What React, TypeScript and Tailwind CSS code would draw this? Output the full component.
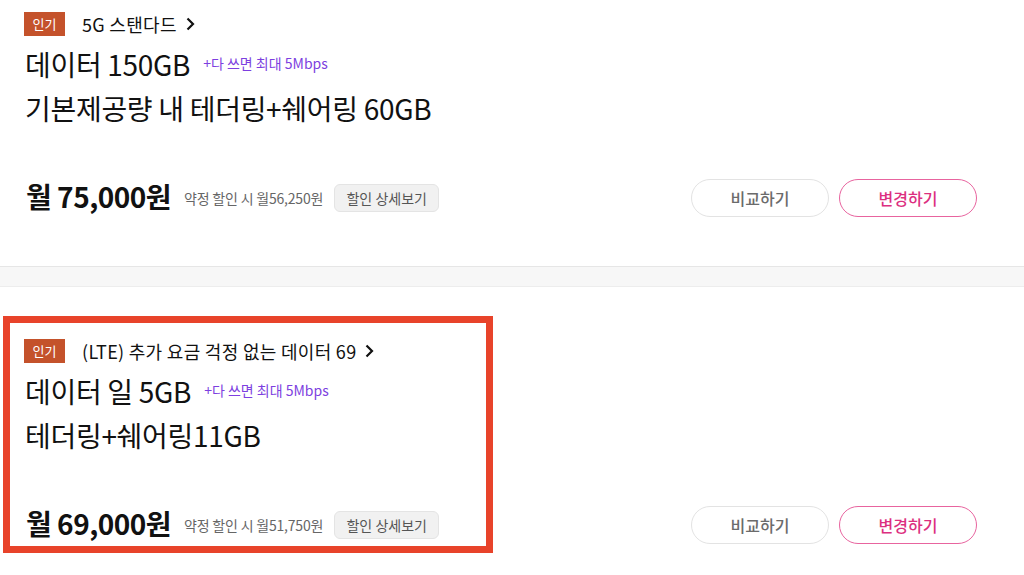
import React from 'react';

type Plan = {
  name: string;
  data: string;
  extra: string;
  price: string;
  discount: string;
};

const plans: Plan[] = [
  {
    name: '5G 스탠다드',
    data: '데이터 150GB',
    extra: '기본제공량 내 테더링+쉐어링 60GB',
    price: '월 75,000원',
    discount: '약정 할인 시 월56,250원',
  },
  {
    name: '(LTE) 추가 요금 걱정 없는 데이터 69',
    data: '데이터 일 5GB',
    extra: '테더링+쉐어링11GB',
    price: '월 69,000원',
    discount: '약정 할인 시 월51,750원',
  },
];

const PlanCard: React.FC<{ plan: Plan; first?: boolean; highlight?: boolean }> = ({ plan, first, highlight }) => (
  <section className={`relative bg-white pl-6 pr-[47px] ${first ? 'pt-3 pb-[49px]' : 'pt-[52px] pb-10'}`}>
    {highlight && (
      <div className="absolute left-[3px] top-[29px] w-[490px] h-[237px] border-[7px] border-[#e8432a] pointer-events-none" />
    )}
    <div className="flex items-center h-6">
      <span className="w-[41px] h-6 bg-[#c4522b] text-white text-[13px] flex items-center justify-center">인기</span>
      <span className="ml-[17px] text-[18px] text-[#111] tracking-[0.3px] flex items-center gap-[9px]">
        {plan.name}
        <svg width="9" height="14" viewBox="0 0 9 14" fill="none">
          <path d="M1.5 1.5 7 7l-5.5 5.5" stroke="#111" strokeWidth="2.2" />
        </svg>
      </span>
    </div>
    <div className="mt-[9px] h-[38px] flex items-center pl-[1px]">
      <span className="text-[28px] text-[#111] tracking-[-0.3px]">{plan.data}</span>
      <span className="ml-[13px] text-[14px] text-[#7d3fe0] mb-[2px]">+다 쓰면 최대 5Mbps</span>
    </div>
    <div className="mt-[6px] h-[38px] flex items-center pl-[1px] text-[28px] text-[#111] tracking-[-0.3px]">
      {plan.extra}
    </div>
    <div className="mt-[52px] h-[38px] flex items-center pl-[2px]">
      <span className="text-[28px] font-bold text-[#111] tracking-[-0.5px] -mt-1">{plan.price}</span>
      <span className="ml-[13px] text-[14px] text-[#666] tracking-[-0.2px]">{plan.discount}</span>
      <button className="ml-[11px] w-[105px] h-[28px] rounded-md bg-[#f1f1f1] border border-[#e4e4e4] text-[14px] text-[#555]">
        할인 상세보기
      </button>
      <div className="ml-auto flex gap-[10px]">
        <button className="w-[138px] h-[38px] rounded-full border border-[#e3e3e3] bg-white text-[16px] text-[#6b6b6b] font-medium">
          비교하기
        </button>
        <button className="w-[138px] h-[38px] rounded-full border border-[#e8649f] bg-white text-[16px] text-[#dc2f80] font-medium">
          변경하기
        </button>
      </div>
    </div>
  </section>
);

const App: React.FC = () => {
  return (
    <div className="w-[1024px] h-[575px] overflow-hidden bg-white" style={{ fontFamily: '"Noto Sans CJK KR", "Noto Sans", sans-serif' }}>
      <PlanCard plan={plans[0]} first />
      <div className="h-[21px] bg-[#f7f7f7] border-t border-[#e6e6e6] border-b border-b-[#ededed]" />
      <PlanCard plan={plans[1]} highlight />
    </div>
  );
};

export default App;
